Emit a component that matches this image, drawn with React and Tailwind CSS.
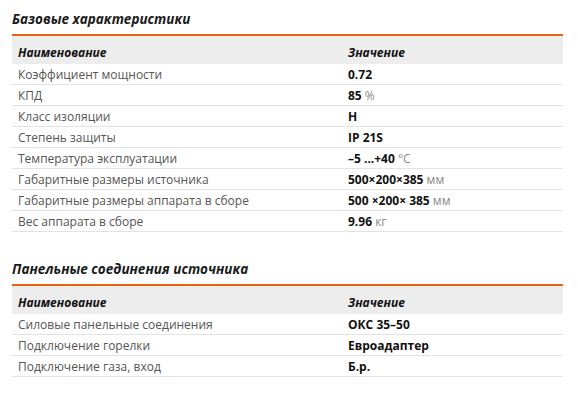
const basic = [
  ['Коэффициент мощности', '0.72', ''],
  ['КПД', '85', '%'],
  ['Класс изоляции', 'H', ''],
  ['Степень защиты', 'IP 21S', ''],
  ['Температура эксплуатации', '–5 ...+40', '°C'],
  ['Габаритные размеры источника', '500×200×385', 'мм'],
  ['Габаритные размеры аппарата в сборе', '500 ×200× 385', 'мм'],
  ['Вес аппарата в сборе', '9.96', 'кг'],
]

const panel = [
  ['Силовые панельные соединения', 'ОКС 35–50', ''],
  ['Подключение горелки', 'Евроадаптер', ''],
  ['Подключение газа, вход', 'Б.р.', ''],
]

function SpecTable({ title, rows }) {
  return (
    <section>
      <h2 className="h-[22px] text-[13.5px] leading-[22px] font-bold italic text-[#1a1a1a]">{title}</h2>
      <div className="mt-[4px] border-t-2 border-[#e8650f]">
        <div className="flex h-[28px] items-end bg-[#ededed] pb-[2px] text-[12px] font-bold italic text-[#111]">
          <div className="w-[336px] pl-[6px]">Наименование</div>
          <div>Значение</div>
        </div>
        {rows.map(([name, value, unit]) => (
          <div key={name} className="flex h-[21px] items-center border-b border-[#e3e3e3] pt-[1px] text-[12px]">
            <div className="w-[336px] pl-[6px] text-[#555]">{name}</div>
            <div className="font-bold text-[#111]">
              {value}
              {unit && <span className="font-normal text-[#888]"> {unit}</span>}
            </div>
          </div>
        ))}
      </div>
    </section>
  )
}

export default function App() {
  return (
    <div className="h-[398px] w-[578px] bg-white pl-[12px] pr-[15px] pt-[8px]" style={{ fontFamily: '"Open Sans", "Noto Sans", sans-serif' }}>
      <SpecTable title="Базовые характеристики" rows={basic} />
      <div className="h-[26px]" />
      <SpecTable title="Панельные соединения источника" rows={panel} />
    </div>
  )
}
